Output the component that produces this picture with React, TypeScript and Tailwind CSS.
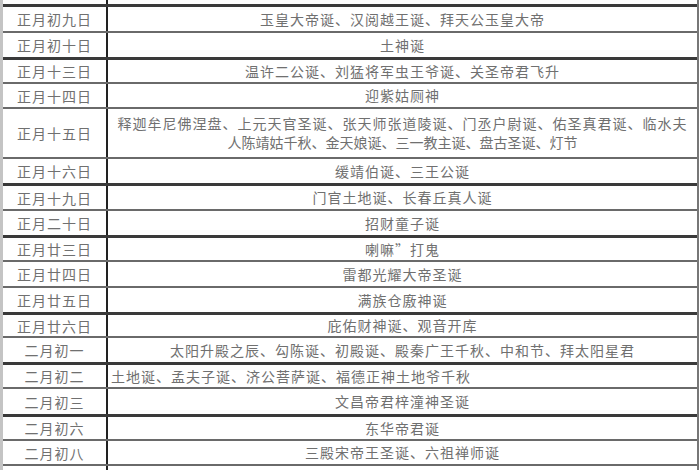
import React from "react";

type Row = { d: string; t: React.ReactNode; h: number; thick?: boolean; left?: boolean };

const rows: Row[] = [
  { d: "正月初九日", t: "玉皇大帝诞、汉阅越王诞、拜天公玉皇大帝", h: 27, thick: true },
  { d: "正月初十日", t: "土神诞", h: 26 },
  { d: "正月十三日", t: "温许二公诞、刘猛将军虫王爷诞、关圣帝君飞升", h: 25, thick: true },
  { d: "正月十四日", t: "迎紫姑厕神", h: 25 },
  {
    d: "正月十五日",
    t: (
      <>
        释迦牟尼佛涅盘、上元天官圣诞、张天师张道陵诞、门丞户尉诞、佑圣真君诞、临水夫
        <br />
        <span className="tracking-[0px]">人陈靖姑千秋、金天娘诞、三一教主诞、盘古圣诞、灯节</span>
      </>
    ),
    h: 50,
  },
  { d: "正月十六日", t: "缓靖伯诞、三王公诞", h: 26 },
  { d: "正月十九日", t: "门官土地诞、长春丘真人诞", h: 26, thick: true },
  { d: "正月二十日", t: "招财童子诞", h: 26 },
  { d: "正月廿三日", t: "喇嘛”打鬼", h: 25, thick: true },
  { d: "正月廿四日", t: "雷都光耀大帝圣诞", h: 26 },
  { d: "正月廿五日", t: "满族仓廒神诞", h: 26 },
  { d: "正月廿六日", t: "庇佑财神诞、观音开库", h: 24, thick: true },
  { d: "二月初一", t: "太阳升殿之辰、勾陈诞、初殿诞、殿秦广王千秋、中和节、拜太阳星君", h: 26 },
  { d: "二月初二", t: "土地诞、孟夫子诞、济公菩萨诞、福德正神土地爷千秋", h: 25, thick: true, left: true },
  { d: "二月初三", t: "文昌帝君梓潼神圣诞", h: 27 },
  { d: "二月初六", t: "东华帝君诞", h: 25, thick: true },
  { d: "二月初八", t: "三殿宋帝王圣诞、六祖禅师诞", h: 25 },
  { d: "", t: "", h: 26 },
];

export default function App() {
  return (
    <div
      className="w-[700px] h-[470px] overflow-hidden bg-white text-[#707070]"
      style={{ fontFamily: '"Noto Sans CJK SC", "Noto Sans", sans-serif' }}
    >
      <div className="flex flex-col border-l-[3px] border-[#c4c4c4] border-r-2 border-r-[#777] w-[699px] h-full">
        <div className="flex h-[4px] shrink-0">
          <div className="w-[105px] border-r-2 border-[#222] shrink-0" />
          <div className="flex-1" />
        </div>
        {rows.map((r, i) => (
          <div
            key={i}
            className={
              "flex shrink-0 box-border " +
              (r.thick ? "border-t-[3px] border-[#3a3a3a]" : "border-t-2 border-[#6a6a6a]")
            }
            style={{ height: r.h }}
          >
            <div className="w-[105px] shrink-0 border-r-2 border-[#222] flex items-center justify-center text-[14px] tracking-[1px] leading-none">
              {r.d}
            </div>
            <div
              className={
                "flex-1 flex items-center text-[14px] tracking-[1px] leading-[19px] " +
                (r.left ? "justify-start pl-[3px]" : "justify-center text-center px-1")
              }
            >
              <div className="whitespace-nowrap">{r.t}</div>
            </div>
          </div>
        ))}
      </div>
    </div>
  );
}
